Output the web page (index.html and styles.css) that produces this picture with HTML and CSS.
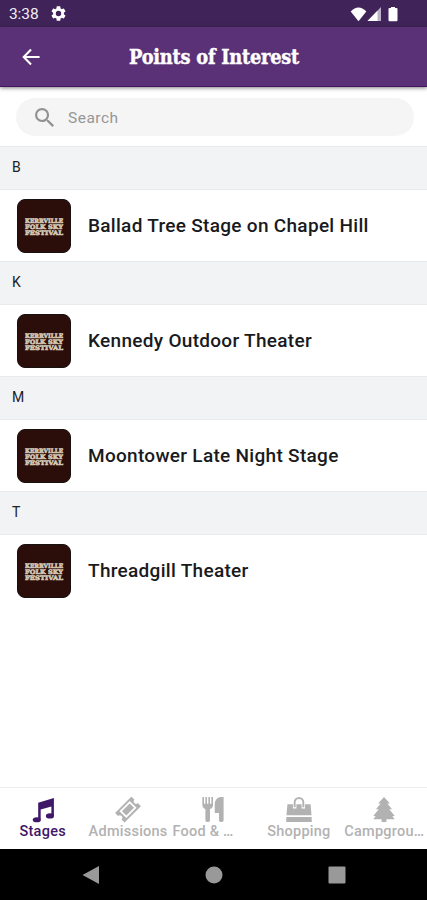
FILE: index.html
```
<!DOCTYPE html>
<html lang="en">
<head>
<meta charset="utf-8">
<title>Points of Interest</title>
<link rel="stylesheet" href="styles.css">
</head>
<body>
<div class="screen">
  <div class="status">
    <span class="time">3:38</span>
    <svg class="gear" viewBox="2 2 20 20"><path d="M19.14 12.94c.04-.3.06-.61.06-.94s-.02-.64-.07-.94l2.03-1.58c.18-.14.23-.41.12-.61l-1.92-3.32c-.12-.22-.37-.29-.59-.22l-2.39.96c-.5-.38-1.03-.7-1.62-.94l-.36-2.54c-.04-.24-.24-.41-.48-.41h-3.84c-.24 0-.43.17-.47.41l-.36 2.54c-.59.24-1.13.57-1.62.94l-2.39-.96c-.22-.08-.47 0-.59.22L2.74 8.87c-.12.21-.08.47.12.61l2.03 1.58c-.05.3-.09.63-.09.94s.02.64.07.94l-2.03 1.58c-.18.14-.23.41-.12.61l1.92 3.32c.12.22.37.29.59.22l2.39-.96c.5.38 1.03.7 1.62.94l.36 2.54c.05.24.24.41.48.41h3.84c.24 0 .44-.17.47-.41l.36-2.54c.59-.24 1.13-.56 1.62-.94l2.39.96c.22.08.47 0 .59-.22l1.92-3.32c.12-.22.07-.47-.12-.61zM12 15.6A3.6 3.6 0 1 1 12 8.4a3.6 3.6 0 0 1 0 7.2z"/></svg>
    <svg class="signals" viewBox="0 0 50 16">
      <path d="M8.500 15.200 .7 5.400Q8.500-2.400 16.300 5.400z"/>
      <path d="M31 1v14H17.500z" opacity=".65"/><path d="M27.500 4.700V15h-10z"/>
      <path d="M38.500 3q0-1 1-1h1.500v-1h4v1h1.500q1 0 1 1v11q0 1.200-1 1.200h-7q-1 0-1-1.200z"/>
    </svg>
  </div>
  <header class="bar">
    <svg class="back" viewBox="0 0 20 18"><path d="M18.500 9H2M9.500 1.200 1.800 9l7.700 7.800"/></svg>
    <h1>Points of Interest</h1>
  </header>
  <div class="search">
    <svg viewBox="3 3 17.500 17.500"><path d="M15.500 14h-.79l-.28-.27A6.470 6.470 0 0 0 16 9.500 6.500 6.500 0 1 0 9.500 16c1.610 0 3.090-.59 4.230-1.570l.27.28v.79l5 4.990L20.490 19zm-6 0a4.500 4.500 0 1 1 0-9 4.500 4.500 0 0 1 0 9z"/></svg>
    <span>Search</span>
  </div>
  <main>
    <section>
      <h2>B</h2>
      <div class="item">
        <svg class="thumb" viewBox="0 0 52 52"><text x="7" y="23.300" textLength="38" lengthAdjust="spacingAndGlyphs">KERRVILLE</text><text x="7" y="29.200" textLength="38" lengthAdjust="spacingAndGlyphs">FOLK SKY</text><text x="7" y="35.100" textLength="38" lengthAdjust="spacingAndGlyphs">FESTIVAL</text></svg>
        <span>Ballad Tree Stage on Chapel Hill</span>
      </div>
    </section>
    <section>
      <h2>K</h2>
      <div class="item">
        <svg class="thumb" viewBox="0 0 52 52"><text x="7" y="23.300" textLength="38" lengthAdjust="spacingAndGlyphs">KERRVILLE</text><text x="7" y="29.200" textLength="38" lengthAdjust="spacingAndGlyphs">FOLK SKY</text><text x="7" y="35.100" textLength="38" lengthAdjust="spacingAndGlyphs">FESTIVAL</text></svg>
        <span>Kennedy Outdoor Theater</span>
      </div>
    </section>
    <section>
      <h2>M</h2>
      <div class="item">
        <svg class="thumb" viewBox="0 0 52 52"><text x="7" y="23.300" textLength="38" lengthAdjust="spacingAndGlyphs">KERRVILLE</text><text x="7" y="29.200" textLength="38" lengthAdjust="spacingAndGlyphs">FOLK SKY</text><text x="7" y="35.100" textLength="38" lengthAdjust="spacingAndGlyphs">FESTIVAL</text></svg>
        <span>Moontower Late Night Stage</span>
      </div>
    </section>
    <section>
      <h2>T</h2>
      <div class="item">
        <svg class="thumb" viewBox="0 0 52 52"><text x="7" y="23.300" textLength="38" lengthAdjust="spacingAndGlyphs">KERRVILLE</text><text x="7" y="29.200" textLength="38" lengthAdjust="spacingAndGlyphs">FOLK SKY</text><text x="7" y="35.100" textLength="38" lengthAdjust="spacingAndGlyphs">FESTIVAL</text></svg>
        <span>Threadgill Theater</span>
      </div>
    </section>
  </main>
  <nav class="tabs">
    <div class="tab active">
      <svg viewBox="0 0 28 28"><path d="M9 6 25.300 1v18.200h-2.600V9.800L11.600 13v10.200H9z"/><ellipse cx="7.600" cy="23.600" rx="4.200" ry="2.700"/><ellipse cx="21.200" cy="19.600" rx="4.200" ry="2.700"/></svg>
      <span>Stages</span>
    </div>
    <div class="tab">
      <svg viewBox="0 0 28 28"><g transform="rotate(-45 14 13)"><path fill-rule="evenodd" d="M2 6h24v4.500a2.500 2.500 0 0 0 0 5V20H2v-4.500a2.500 2.500 0 0 0 0-5zM6.500 8v10h15V8z"/><path d="M8.300 9.800h11.400v6.400H8.300z"/></g></svg>
      <span>Admissions</span>
    </div>
    <div class="tab food">
      <svg viewBox="0 0 28 28"><path d="M3 0h1.700v7h1.400V0h1.700v7h1.400V0h1.700v7h1.400V0H14v8.500q0 2.800-3.100 4V24q0 2-2.400 2T6.100 24V12.500Q3 11.300 3 8.500zM25 0v24q0 2-2.400 2t-2.400-2v-7.500h-4.400V8q0-7 6-8z"/></svg>
      <span>Food &amp; …</span>
    </div>
    <div class="tab">
      <svg viewBox="0 0 28 28"><path d="M2 7.500h24l1 11.500H1zM.9 20.700h26.200L27.300 26H.7z"/><path class="cut" d="M9.500 12V5.500a4.500 4.500 0 0 1 9 0V12"/><path class="handle" d="M9.500 10.500V5.500a4.500 4.500 0 0 1 9 0v5"/></svg>
      <span>Shopping</span>
    </div>
    <div class="tab">
      <svg viewBox="0 0 28 28"><path d="m14 0 6.200 6.800h-2.800l5 6h-3l5.800 6.800h-2.600L25 23h-8.500v3h-5v-3H3l2.400-3.400H2.800l5.800-6.800h-3l5-6H7.800z"/></svg>
      <span>Campgrou…</span>
    </div>
  </nav>
  <footer class="system">
    <svg viewBox="0 0 18 18"><path d="M.5 9 17 0v18z"/></svg>
    <svg viewBox="0 0 18 18"><circle cx="9" cy="9" r="8.500"/></svg>
    <svg viewBox="0 0 18 18"><rect x=".5" y=".5" width="17" height="17" rx="1"/></svg>
  </footer>
</div>
</body>
</html>
```
FILE: styles.css
```
* { box-sizing: border-box; }
body { margin: 0; background: #fff; font-family: Roboto, sans-serif; }
svg { display: block; flex: none; }
.screen { display: flex; flex-direction: column; width: 427px; height: 900px; overflow: hidden; }
.status { display: flex; align-items: center; height: 27px; padding: 0 27px 0 9px; background: #402459; color: #f1edf4; }
.time { width: 42px; font-size: 15.500px; letter-spacing: -.1px; padding-top: 1px; }
.gear { width: 15px; height: 15px; fill: #fff; }
.signals { width: 50px; height: 16px; margin-left: auto; fill: #fff; }
.bar { display: grid; grid-template-columns: 40px 1fr 40px; align-items: center; height: 60px; padding: 0 22px; background: #5a3076; border-bottom: 1px solid #45145f; box-shadow: 0 1px 4px rgba(0,0,0,.5); }
.back { width: 19px; height: 18px; fill: none; stroke: #fff; stroke-width: 2.200; }
h1 { margin: 0 -1px 0 1px; justify-self: center; white-space: nowrap; color: #fff; font: bold 20.500px/28px "DejaVu Serif Condensed", "DejaVu Serif", serif; letter-spacing: -.25px; -webkit-text-stroke: .4px #fff; transform: scaleX(.965); }
.search { display: flex; align-items: center; height: 38px; margin: 11px 13px 10px 16px; padding-left: 19px; border-radius: 19px; background: #f5f5f5; color: #969696; font-size: 15.500px; letter-spacing: .5px; }
.search svg { width: 19px; height: 19px; margin-right: 14px; fill: #929292; }
.search span { padding-top: 2px; }
main { flex: 1; }
section { height: 115.100px; }
h2 { display: flex; align-items: center; height: 44px; margin: 0; padding: 0 12px 3px; background: #f1f3f5; border-top: 1px solid #e8eaeb; border-bottom: 1px solid #e8eaeb; color: #202124; font-size: 14px; font-weight: 400; }
.item { display: flex; align-items: center; height: 71px; padding: 0 17px; color: #191a20; font-size: 19px; font-weight: 500; letter-spacing: .3px; }
.thumb { width: 54px; height: 54px; margin-right: 17px; border: 1px solid #17110f; border-radius: 8px; background: #2b0d0a; }
.thumb text { fill: #d5c9b6; stroke: #d5c9b6; stroke-width: .6px; font: bold 6px "DejaVu Serif", serif; letter-spacing: 0; }
.tabs { display: grid; grid-template-columns: repeat(5, 1fr); height: 62px; border-top: 1px solid #eee; }
.tab { display: flex; flex-direction: column; align-items: center; padding-top: 9px; color: #b2b2b2; font-size: 14.500px; line-height: 17px; font-weight: 500; letter-spacing: .25px; white-space: nowrap; }
.tab svg { width: 28px; height: 27px; margin-bottom: -1px; fill: currentColor; }
.tab .handle { fill: none; stroke: currentColor; stroke-width: 2; }
.tab .cut { fill: none; stroke: #fff; stroke-width: 3.600; }
.food span { margin-right: 21px; }
.active { color: #3f1768; }
.system { display: grid; grid-template-columns: repeat(3, 1fr); justify-items: center; align-items: center; height: 51px; padding: 0 29px; background: #000; }
.system svg { width: 18px; height: 18px; fill: #999; }
```
